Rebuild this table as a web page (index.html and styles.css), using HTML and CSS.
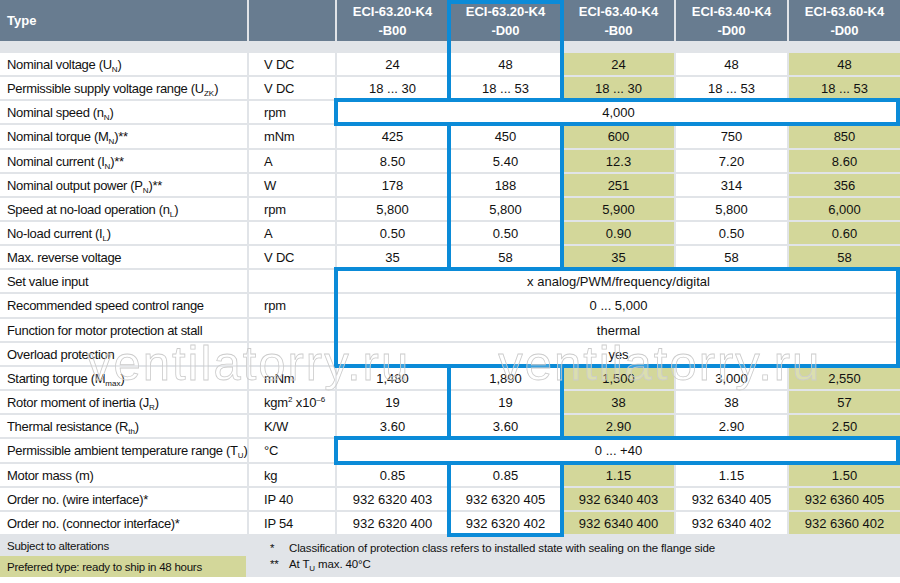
FILE: index.html
```html
<!DOCTYPE html>
<html>
<head>
<meta charset="utf-8">
<link rel="stylesheet" href="styles.css">
</head>
<body>
<div class="sheet">
  <div class="tablewrap">
    <div class="grid">
      <div class="hd type">Type</div>
      <div class="hd"></div>
      <div class="hd model">ECI-63.20-K4<br>-B00</div>
      <div class="hd model">ECI-63.20-K4<br>-D00</div>
      <div class="hd model">ECI-63.40-K4<br>-B00</div>
      <div class="hd model">ECI-63.40-K4<br>-D00</div>
      <div class="hd model">ECI-63.60-K4<br>-D00</div>
      <div class="band"></div>

      <div class="c lbl">Nominal voltage (U<sub class="s">N</sub>)</div><div class="c unit">V DC</div>
      <div class="c v">24</div><div class="c v">48</div><div class="c v g">24</div><div class="c v">48</div><div class="c v g">48</div>

      <div class="c lbl">Permissible supply voltage range (U<sub class="s">ZK</sub>)</div><div class="c unit">V DC</div>
      <div class="c v">18 ... 30</div><div class="c v">18 ... 53</div><div class="c v g">18 ... 30</div><div class="c v">18 ... 53</div><div class="c v g">18 ... 53</div>

      <div class="c lbl">Nominal speed (n<sub class="s">N</sub>)</div><div class="c unit">rpm</div>
      <div class="c v span">4,000</div>

      <div class="c lbl">Nominal torque (M<sub class="s">N</sub>)**</div><div class="c unit">mNm</div>
      <div class="c v">425</div><div class="c v">450</div><div class="c v g">600</div><div class="c v">750</div><div class="c v g">850</div>

      <div class="c lbl">Nominal current (I<sub class="s">N</sub>)**</div><div class="c unit">A</div>
      <div class="c v">8.50</div><div class="c v">5.40</div><div class="c v g">12.3</div><div class="c v">7.20</div><div class="c v g">8.60</div>

      <div class="c lbl">Nominal output power (P<sub class="s">N</sub>)**</div><div class="c unit">W</div>
      <div class="c v">178</div><div class="c v">188</div><div class="c v g">251</div><div class="c v">314</div><div class="c v g">356</div>

      <div class="c lbl">Speed at no-load operation (n<sub class="s">L</sub>)</div><div class="c unit">rpm</div>
      <div class="c v">5,800</div><div class="c v">5,800</div><div class="c v g">5,900</div><div class="c v">5,800</div><div class="c v g">6,000</div>

      <div class="c lbl">No-load current (I<sub class="s">L</sub>)</div><div class="c unit">A</div>
      <div class="c v">0.50</div><div class="c v">0.50</div><div class="c v g">0.90</div><div class="c v">0.50</div><div class="c v g">0.60</div>

      <div class="c lbl">Max. reverse voltage</div><div class="c unit">V DC</div>
      <div class="c v">35</div><div class="c v">58</div><div class="c v g">35</div><div class="c v">58</div><div class="c v g">58</div>

      <div class="c lbl">Set value input</div><div class="c unit"></div>
      <div class="c v span">x analog/PWM/frequency/digital</div>

      <div class="c lbl">Recommended speed control range</div><div class="c unit">rpm</div>
      <div class="c v span">0 ... 5,000</div>

      <div class="c lbl">Function for motor protection at stall</div><div class="c unit"></div>
      <div class="c v span">thermal</div>

      <div class="c lbl">Overload protection</div><div class="c unit"></div>
      <div class="c v span">yes</div>

      <div class="c lbl">Starting torque (M<sub class="s">max</sub>)</div><div class="c unit">mNm</div>
      <div class="c v">1,480</div><div class="c v">1,890</div><div class="c v g">1,500</div><div class="c v">3,000</div><div class="c v g">2,550</div>

      <div class="c lbl">Rotor moment of inertia (J<sub class="s">R</sub>)</div><div class="c unit">kgm<sup class="p">2</sup> x10<sup class="p">–6</sup></div>
      <div class="c v">19</div><div class="c v">19</div><div class="c v g">38</div><div class="c v">38</div><div class="c v g">57</div>

      <div class="c lbl">Thermal resistance (R<sub class="s">th</sub>)</div><div class="c unit">K/W</div>
      <div class="c v">3.60</div><div class="c v">3.60</div><div class="c v g">2.90</div><div class="c v">2.90</div><div class="c v g">2.50</div>

      <div class="c lbl">Permissible ambient temperature range (T<sub class="s">U</sub>)</div><div class="c unit">°C</div>
      <div class="c v span">0 ... +40</div>

      <div class="c lbl">Motor mass (m)</div><div class="c unit">kg</div>
      <div class="c v">0.85</div><div class="c v">0.85</div><div class="c v g">1.15</div><div class="c v">1.15</div><div class="c v g">1.50</div>

      <div class="c lbl">Order no. (wire interface)*</div><div class="c unit">IP 40</div>
      <div class="c v">932 6320 403</div><div class="c v">932 6320 405</div><div class="c v g">932 6340 403</div><div class="c v">932 6340 405</div><div class="c v g">932 6360 405</div>

      <div class="c lbl">Order no. (connector interface)*</div><div class="c unit">IP 54</div>
      <div class="c v">932 6320 400</div><div class="c v">932 6320 402</div><div class="c v g">932 6340 400</div><div class="c v">932 6340 402</div><div class="c v g">932 6360 402</div>
    </div>

    <div class="grid overlay">
      <div class="box col4 first" style="grid-row: 1 / 5"></div>
      <div class="box wide" style="grid-row: 5 / 6"></div>
      <div class="box col4" style="grid-row: 6 / 12"></div>
      <div class="box wide" style="grid-row: 12 / 16"></div>
      <div class="box col4" style="grid-row: 16 / 19"></div>
      <div class="box wide" style="grid-row: 19 / 20"></div>
      <div class="box col4" style="grid-row: 20 / 23"></div>
    </div>

    <div class="watermark"><span>ventilatorry.ru</span><span>ventilatorry.ru</span></div>
  </div>

  <div class="footer">
    <div class="fleft">
      <div class="alt">Subject to alterations</div>
      <div class="pref">Preferred type: ready to ship in 48 hours</div>
    </div>
    <div class="fright">
      <div class="note"><span class="mark">*</span><span>Classification of protection class refers to installed state with sealing on the flange side</span></div>
      <div class="note"><span class="mark">**</span><span>At T<sub class="s">U</sub> max. 40°C</span></div>
    </div>
  </div>
</div>
</body>
</html>
```

FILE: styles.css
```css
html, body {
  margin: 0;
  padding: 0;
  background: #ffffff;
}

body {
  font-family: "Liberation Sans Narrow", "Liberation Sans", Arial, sans-serif;
  font-size: 13px;
  color: #111111;
}

.sheet {
  width: 900px;
  height: 577px;
  background: #e1e4e8;
  display: flex;
  flex-direction: column;
}

.tablewrap {
  position: relative;
  height: 534px;
  flex: none;
}

.grid {
  display: grid;
  grid-template-columns: 247px 86px repeat(5, minmax(0, 1fr));
  grid-template-rows: 41px 8px repeat(20, minmax(0, 1fr));
  gap: 2px;
  height: 534px;
}

.hd {
  background: #687c90;
  color: #ffffff;
  font-weight: bold;
  display: flex;
  align-items: center;
  justify-content: center;
  text-align: center;
  line-height: 19px;
}

.hd.type {
  justify-content: flex-start;
  padding-left: 7px;
}

.band {
  grid-column: 1 / -1;
}

.c {
  background: #ffffff;
  line-height: 22px;
  padding-top: 1px;
  white-space: nowrap;
  min-height: 0;
}

.lbl {
  padding-left: 7px;
  letter-spacing: -0.32px;
}

.unit {
  padding-left: 15px;
  letter-spacing: -0.2px;
}

.v {
  text-align: center;
}

.v.g {
  background: #d3d79a;
}

.span {
  grid-column: 3 / -1;
}

.s {
  font-size: 8px;
  line-height: 0;
  vertical-align: -3px;
  letter-spacing: 0;
}

.p {
  font-size: 8px;
  line-height: 0;
  vertical-align: 5px;
  letter-spacing: 0;
}

.overlay {
  position: absolute;
  inset: 0;
  pointer-events: none;
  z-index: 2;
}

.box {
  border: 4px solid #0b8bd8;
  margin: -3px;
}

.box.col4 {
  grid-column: 4 / 5;
}

.box.first {
  margin-top: 0;
}

.box.wide {
  grid-column: 3 / 8;
  margin-right: 0;
}

.watermark {
  position: absolute;
  left: 87px;
  top: 335px;
  display: flex;
  gap: 88px;
  pointer-events: none;
  z-index: 3;
}

.watermark span {
  font-family: "Liberation Sans", Arial, sans-serif;
  font-size: 49px;
  line-height: 56px;
  letter-spacing: 2px;
  color: rgba(255, 255, 255, 0.2);
  -webkit-text-stroke: 0.8px #cbcbcb;
}

.footer {
  display: grid;
  grid-template-columns: 247px 1fr;
  height: 43px;
  font-size: 11.5px;
  flex: none;
}

.fleft {
  display: flex;
  flex-direction: column;
  justify-content: flex-end;
}

.alt {
  height: 22px;
  padding-left: 7px;
  padding-top: 2px;
  box-sizing: border-box;
  display: flex;
  align-items: center;
  letter-spacing: -0.25px;
}

.pref {
  background: #d3d79a;
  height: 21px;
  width: 246px;
  box-sizing: border-box;
  padding-left: 7px;
  display: flex;
  align-items: center;
  letter-spacing: -0.25px;
}

.fright {
  padding-top: 6px;
  padding-left: 23px;
  letter-spacing: -0.15px;
}

.note {
  display: flex;
  height: 16px;
  align-items: center;
}

.mark {
  width: 19px;
}
```
